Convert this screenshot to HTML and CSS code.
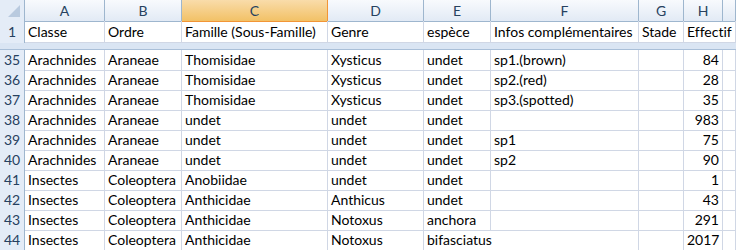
FILE: index.html
```html
<!DOCTYPE html>
<html lang="fr">
<head>
    <meta charset="UTF-8">
    <title>Inventaire</title>
    <link rel="stylesheet" href="styles.css">
</head>
<body>
    <div class="sheet">
        <div class="row col-head">
            <div class="corner">
                <svg width="24" height="20" viewBox="0 0 24 20"><polygon points="20,5 20,17 8,17" fill="#b9cadf"/></svg>
            </div>
            <div>A</div>
            <div>B</div>
            <div class="picked">C</div>
            <div>D</div>
            <div>E</div>
            <div>F</div>
            <div>G</div>
            <div>H</div>
            <div></div>
        </div>

        <div class="row first">
            <div class="num">1</div>
            <div>Classe</div>
            <div>Ordre</div>
            <div>Famille (Sous-Famille)</div>
            <div>Genre</div>
            <div>espèce</div>
            <div>Infos complémentaires</div>
            <div>Stade</div>
            <div class="spill">Effectif</div>
            <div></div>
        </div>

        <div class="row sliver">
            <div class="num"></div>
            <div></div><div></div><div></div><div></div><div></div><div></div><div></div><div></div><div></div>
        </div>
        <div class="split"></div>

        <div class="row">
            <div class="num">35</div>
            <div>Arachnides</div><div>Araneae</div><div>Thomisidae</div><div>Xysticus</div><div>undet</div>
            <div>sp1.(brown)</div><div></div><div class="n">84</div><div></div>
        </div>
        <div class="row">
            <div class="num">36</div>
            <div>Arachnides</div><div>Araneae</div><div>Thomisidae</div><div>Xysticus</div><div>undet</div>
            <div>sp2.(red)</div><div></div><div class="n">28</div><div></div>
        </div>
        <div class="row">
            <div class="num">37</div>
            <div>Arachnides</div><div>Araneae</div><div>Thomisidae</div><div>Xysticus</div><div>undet</div>
            <div>sp3.(spotted)</div><div></div><div class="n">35</div><div></div>
        </div>
        <div class="row">
            <div class="num">38</div>
            <div>Arachnides</div><div>Araneae</div><div>undet</div><div>undet</div><div>undet</div>
            <div></div><div></div><div class="n">983</div><div></div>
        </div>
        <div class="row">
            <div class="num">39</div>
            <div>Arachnides</div><div>Araneae</div><div>undet</div><div>undet</div><div>undet</div>
            <div>sp1</div><div></div><div class="n">75</div><div></div>
        </div>
        <div class="row">
            <div class="num">40</div>
            <div>Arachnides</div><div>Araneae</div><div>undet</div><div>undet</div><div>undet</div>
            <div>sp2</div><div></div><div class="n">90</div><div></div>
        </div>
        <div class="row">
            <div class="num">41</div>
            <div>Insectes</div><div>Coleoptera</div><div>Anobiidae</div><div>undet</div><div>undet</div>
            <div></div><div></div><div class="n">1</div><div></div>
        </div>
        <div class="row">
            <div class="num">42</div>
            <div>Insectes</div><div>Coleoptera</div><div>Anthicidae</div><div>Anthicus</div><div>undet</div>
            <div></div><div></div><div class="n">43</div><div></div>
        </div>
        <div class="row">
            <div class="num">43</div>
            <div>Insectes</div><div>Coleoptera</div><div>Anthicidae</div><div>Notoxus</div><div>anchora</div>
            <div></div><div></div><div class="n">291</div><div></div>
        </div>
        <div class="row">
            <div class="num">44</div>
            <div>Insectes</div><div>Coleoptera</div><div>Anthicidae</div><div>Notoxus</div><div class="spill">bifasciatus</div>
            <div></div><div></div><div class="n">2017</div><div></div>
        </div>
    </div>
</body>
</html>
```

FILE: styles.css
```css
body {
    margin: 0;
    font-family: Lato, "Liberation Sans", sans-serif;
    font-size: 14px;
    font-variant-ligatures: none;
    color: #000;
    background: #fff;
    overflow: hidden;
}

.sheet {
    width: 736px;
}

.row {
    display: grid;
    grid-template-columns: 25px 80px 77px 146px 96px 67px 148px 45px 39px 1fr;
    height: 20px;
}

.row > div {
    box-sizing: border-box;
    border-right: 1px solid #d0d7e5;
    border-bottom: 1px solid #d0d7e5;
    padding: 0 3px;
    line-height: 20px;
    white-space: nowrap;
}

.row > .spill {
    border-right-color: transparent;
}

.row > .n {
    text-align: right;
}

/* column letters */
.col-head {
    height: 21px;
}

.col-head > div {
    background: linear-gradient(#f8fafd, #e2eaf5);
    border-right-color: #9eb6ce;
    border-bottom-color: #9eb6ce;
    color: #27415f;
    text-align: center;
    line-height: 21px;
}

.col-head > .corner {
    background: #e4ecf7;
    padding: 0;
}

.corner svg {
    display: block;
}

.col-head > .picked {
    background: linear-gradient(#f9dcaa, #f2c166);
    border-right-color: #f29536;
    border-bottom-color: #f29536;
}

.first {
    height: 21px;
}

.first > div {
    line-height: 21px;
}

/* row numbers */
.row > .num {
    background: #e4ecf7;
    border-right-color: #9eb6ce;
    border-bottom-color: #b7c8dc;
    color: #27415f;
    text-align: center;
    padding: 0;
}

.sliver {
    height: 1px;
}

.sliver > div {
    border-bottom: none;
}

.split {
    height: 7px;
    box-sizing: border-box;
    background: #dae5f3;
    border-bottom: 1px solid #a9bfd8;
}
```
